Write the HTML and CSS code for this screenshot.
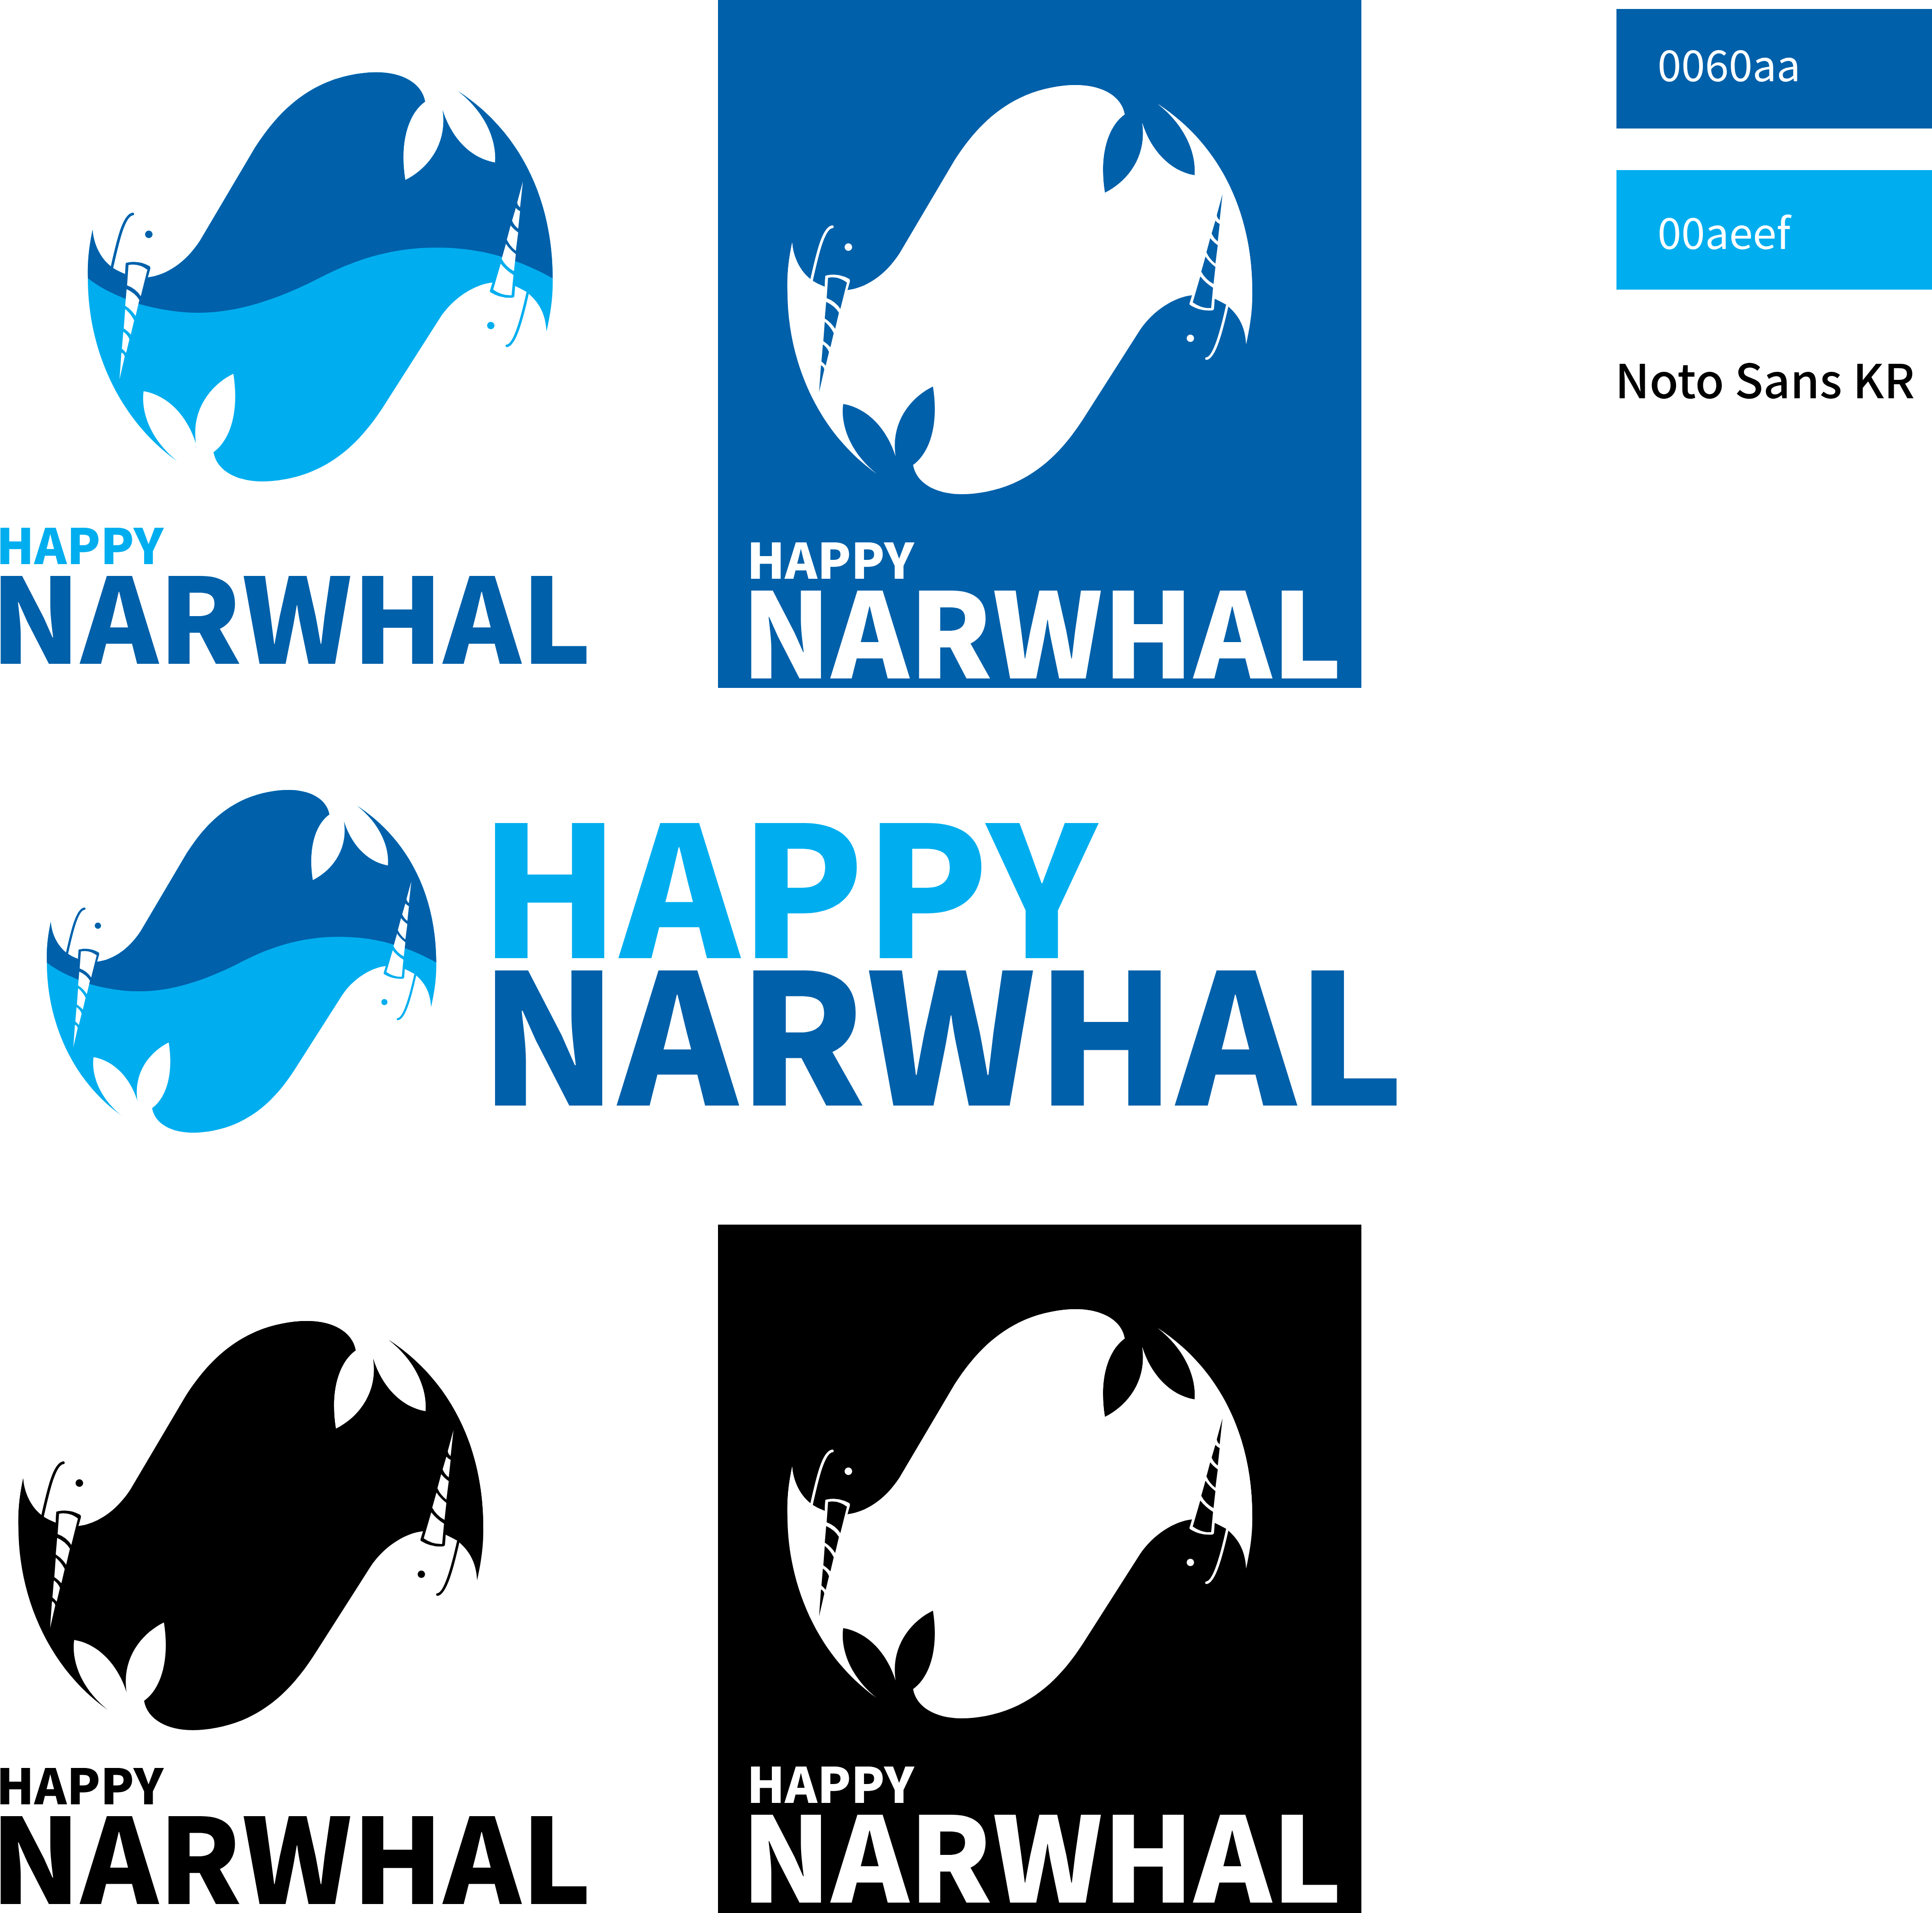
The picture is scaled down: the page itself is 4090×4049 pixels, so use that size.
FILE: index.html
```html
<!DOCTYPE html>
<html lang="en">
<head>
<meta charset="utf-8">
<title>Happy Narwhal logo sheet</title>
<link rel="stylesheet" href="styles.css">
</head>
<body>
<svg class="defs" aria-hidden="true">
  <defs>
    <clipPath id="upper">
      <path d="M186,589C215,612 250,627 293,643C335,655 380,662 420,662C500,662 585,635 673,590C740,555 820,524 925,524C1020,524 1100,550 1170,589L1300,589L1300,0L0,0L0,589Z"/>
    </clipPath>
    <g id="body">
      <path d="M196,486C198,516 212,546 235,564C244,571 255,576 265,580C280,586 297,589 314,587C352,582 392,557 423,510L540,312C575,258 620,205 690,175C725,160 765,153 797,153C850,153 893,175 900,215C865,240 845,300 858,381C905,358 948,305 937,233C955,290 995,335 1048,344C1052,300 1030,240 970,193C1100,278 1170,420 1170,590C1171,630 1165,665 1157,702C1155,665 1142,640 1115,618C1108,614 1100,610 1092,606C1075,600 1060,597 1042,598C1005,602 960,630 932,672L812,860C777,914 732,967 662,997C627,1012 587,1019 555,1019C502,1019 459,997 452,957C487,932 507,872 494,791C447,814 404,867 415,939C397,882 357,837 304,828C298,872 318,930 375,976C256,892 186,745 186,589C185,550 189,520 196,486Z"/>
      <path d="M269,556Q294,551 316,563Q319,565 318,569L253,803L266,559Q266,556 269,556Z"/>
      <path d="M1107,384L1089,626Q1089,629 1085,630Q1060,632 1039,619Q1037,618 1037,616Z"/>
      <circle cx="315" cy="496" r="7.8"/>
      <circle cx="1039" cy="689" r="7.8"/>
      <path class="whisker" d="M237,566C249,512 262,455 281,453"/>
      <path class="whisker" d="M1117,620C1105,674 1090,730 1073,732"/>
    </g>
    <g id="narwhal">
      <use href="#body" class="tone-low"/>
      <g clip-path="url(#upper)"><use href="#body" class="tone-high"/></g>
      <g class="cut">
        <path d="M272,561Q294,557 312,571L298,627Q288,611 269,604Z"/>
        <path d="M268,612Q286,620 295,635L287,669Q279,656 265,647Z"/>
        <path d="M265,654Q277,664 284,678L277,708Q271,701 262,695Z"/>
        <path d="M261,702Q270,708 274,718L267,747Q263,742 258,738Z"/>
        <path d="M257,746Q263,749 264,755L253,803Z"/>
        <path d="M1107,384L1095,428Q1095,434 1101,439Z"/>
        <path d="M1092,440Q1095,444 1101,447L1097,484Q1088,477 1084,467Z"/>
        <path d="M1081,477Q1087,485 1097,492L1092,531Q1079,521 1073,507Z"/>
        <path d="M1071,516Q1079,528 1092,538L1088,574Q1071,565 1062,548Z"/>
        <path d="M1060,558Q1071,572 1087,582L1083,625Q1062,626 1044,613Z"/>
      </g>
    </g>
  </defs>
</svg>

<main class="sheet">
  <section class="cell cell--plain-top tone-brand">
    <svg class="whale" viewBox="180 140 1000 900"><use href="#narwhal"/></svg>
    <h2 class="mark mark--top"><span class="happy">HAPPY</span><span class="narwhal">NARWHAL</span></h2>
  </section>

  <section class="cell cell--square-top tone-blue">
    <svg class="whale" viewBox="180 140 1000 900"><use href="#narwhal"/></svg>
    <h2 class="mark"><span class="happy">HAPPY</span><span class="narwhal">NARWHAL</span></h2>
  </section>

  <aside class="specs">
    <div class="swatch swatch--dark">0060aa</div>
    <div class="swatch swatch--light">00aeef</div>
    <p class="fontname">Noto Sans KR</p>
  </aside>

  <section class="wide tone-brand">
    <svg class="whale whale--wide" viewBox="180 140 1000 900"><use href="#narwhal"/></svg>
    <h2 class="bigmark"><span class="happy">HAPPY</span><span class="narwhal">NARWHAL</span></h2>
  </section>

  <section class="cell cell--plain-bottom tone-black">
    <svg class="whale" viewBox="180 140 1000 900"><use href="#narwhal"/></svg>
    <h2 class="mark mark--top"><span class="happy">HAPPY</span><span class="narwhal">NARWHAL</span></h2>
  </section>

  <section class="cell cell--square-bottom tone-ink">
    <svg class="whale" viewBox="180 140 1000 900"><use href="#narwhal"/></svg>
    <h2 class="mark"><span class="happy">HAPPY</span><span class="narwhal">NARWHAL</span></h2>
  </section>
</main>
</body>
</html>
```

FILE: styles.css
```css
* { box-sizing: border-box; }
html, body { margin: 0; padding: 0; background: #fff; }
body { font-family: "Noto Sans CJK KR", "Noto Sans", sans-serif; width: 4090px; height: 4049px; overflow: hidden; }

.defs { position: absolute; width: 0; height: 0; }

.sheet {
  display: grid;
  width: 4090px;
  height: 4049px;
  grid-template-columns: 1520px 1362px 1208px;
  grid-template-rows: 1456px 1136px 1457px;
}

.tone-brand { --c1: #0060aa; --c2: #00aeef; --bg: #fff; --t1: #00aeef; --t2: #0060aa; background: #fff; }
.tone-blue  { --c1: #fff; --c2: #fff; --bg: #0060aa; --t1: #fff; --t2: #fff; background: #0060aa; }
.tone-black { --c1: #000; --c2: #000; --bg: #fff; --t1: #000; --t2: #000; background: #fff; }
.tone-ink   { --c1: #fff; --c2: #fff; --bg: #000; --t1: #fff; --t2: #fff; background: #000; }

.tone-high { fill: var(--c1); color: var(--c1); }
.tone-low  { fill: var(--c2); color: var(--c2); }
.whisker { fill: none; stroke: currentColor; stroke-width: 5.5px; stroke-linecap: round; }
.cut { fill: var(--bg); }

.whale { display: block; width: 1000px; height: 900px; flex: none; }

.cell { display: flex; flex-direction: column; align-items: flex-start; overflow: hidden; }
.cell--plain-top { grid-row: 1; grid-column: 1; padding-top: 140px; }
.cell--plain-top .whale { margin-left: 180px; }
.cell--square-top { grid-row: 1; grid-column: 2; padding-top: 167px; }
.cell--square-top .whale { margin-left: 141px; }
.cell--plain-bottom { grid-row: 3; grid-column: 1; padding-top: 191px; }
.cell--plain-bottom .whale { margin-left: 33px; }
.cell--plain-bottom .mark { margin-top: 51px; }
.cell--square-bottom { grid-row: 3; grid-column: 2; padding-top: 166px; }
.cell--square-bottom .whale { margin-left: 141px; }

.mark { margin: 73px 0 0 69px; font-weight: 900; display: flex; flex-direction: column; white-space: nowrap; }
.mark--top { margin-left: 0; margin-top: 69px; }
.mark .happy { font-size: 104px; line-height: 79px; height: 79px; margin-left: -8px; color: var(--t1); }
.mark .narwhal { font-size: 249.5px; line-height: 186px; height: 186px; margin: 16px 0 0 -20px; color: var(--t2); }

.wide {
  grid-row: 2;
  grid-column: 1 / span 2;
  display: flex;
  align-items: flex-start;
  padding: 205px 0 0 94px;
}
.whale--wide { width: 838px; height: 754px; }
.bigmark { margin: 58px 0 0 83px; font-weight: 900; display: flex; flex-direction: column; }
.bigmark span { font-size: 384px; line-height: 284px; height: 284px; white-space: nowrap; }
.bigmark .happy { color: var(--t1); }
.bigmark .narwhal { color: var(--t2); margin-top: 28px; }

.specs { padding: 19px 0 0 540px; grid-row: 1; grid-column: 3; }
.swatch {
  height: 253px;
  display: flex;
  align-items: center;
  padding: 0 0 24px 87px;
  color: #fff;
  font-size: 90.5px;
  font-weight: 400;
  line-height: 1;
}
.swatch--dark { background: #0060aa; }
.swatch--light { background: #00aeef; margin-top: 88px; padding: 3px 0 0 87px; }
.fontname { margin: 138px 0 0 -3px; font-size: 99.5px; line-height: 1; font-weight: 500; color: #000; white-space: nowrap; }
```
